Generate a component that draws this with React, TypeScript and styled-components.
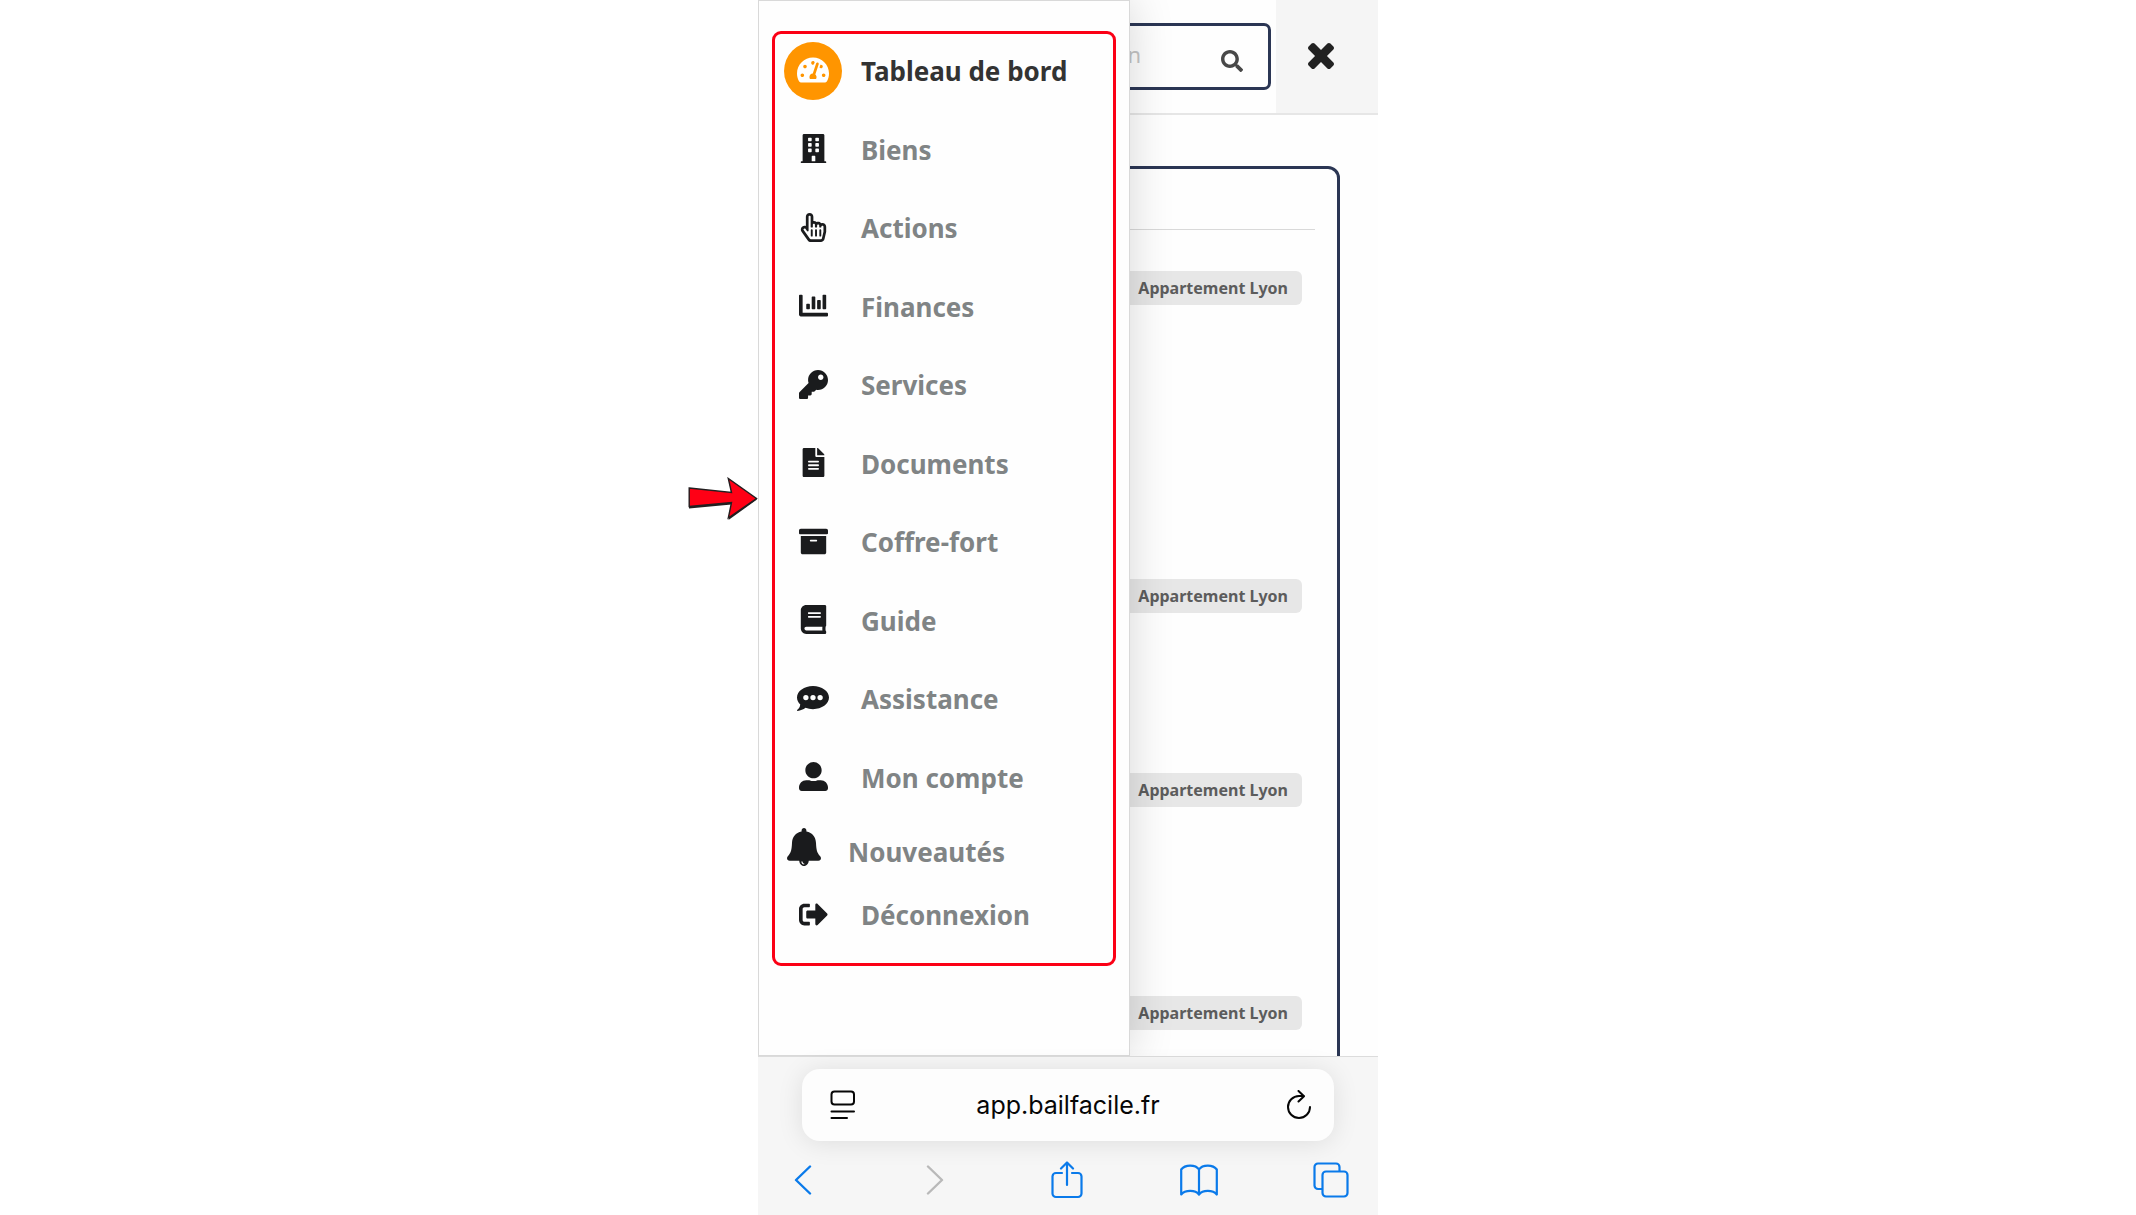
import React from "react";
import styled, { createGlobalStyle, css } from "styled-components";
import {
  FaArchive,
  FaBook,
  FaBuilding,
  FaChartBar,
  FaFileAlt,
  FaKey,
  FaRegHandPointer,
  FaSearch,
  FaSignOutAlt,
  FaTachometerAlt,
  FaUserAlt,
} from "react-icons/fa";

const navy = "#2b3654";
const blue = "#0a7aea";
const ink = "#1a1b1d";

const GlobalStyle = createGlobalStyle`
  *, *::before, *::after { box-sizing: border-box; }
  body {
    margin: 0;
    background: #fff;
    font-family: "Noto Sans", "Open Sans", sans-serif;
  }
  button { padding: 0; border: 0; background: none; font: inherit; color: inherit; }
  ul { margin: 0; padding: 0; list-style: none; }
`;

const Phone = styled.div`
  position: relative;
  display: flex;
  flex-direction: column;
  width: 100%;
  max-width: 620px;
  height: 100vh;
  margin: 0 auto;
  background: #fefefe;
`;

const Screen = styled.div`
  position: relative;
  flex: 1;
  min-height: 0;
  overflow: hidden;
`;

const Header = styled.header`
  display: flex;
  border-bottom: 2px solid #e6e6e6;
`;

const SearchForm = styled.form`
  display: flex;
  flex: 1;
  align-items: center;
  height: 67px;
  margin: 23px 5px 23px 24px;
  padding-right: 25px;
  border: 3px solid ${navy};
  border-radius: 7px;
`;

const SearchInput = styled.input`
  flex: 1;
  min-width: 0;
  height: 100%;
  padding: 0 80px 6px 0;
  border: 0;
  outline: 0;
  background: transparent;
  font-family: inherit;
  font-size: 22px;
  text-align: right;
  &::placeholder { color: #c4c4c4; opacity: 1; }
`;

const SearchButton = styled.button`
  display: flex;
  padding-top: 8px;
  color: #484848;
`;

const CloseButton = styled.button`
  display: flex;
  align-items: center;
  justify-content: center;
  width: 102px;
  padding: 0 12px 2px 0;
  background: #f5f5f5;
  color: #222;
`;

const Card = styled.main`
  min-height: 1000px;
  margin: 51px 38px 0;
  padding: 60px 22px 0;
  border: 3px solid ${navy};
  border-radius: 12px;
`;

const TagList = styled.ul`
  padding: 41px 13px 0;
  border-top: 1px solid #d9d9d9;
`;

const TagRow = styled.li<{ $height: number }>`
  display: flex;
  align-items: flex-start;
  justify-content: flex-end;
  height: ${(p) => p.$height}px;
`;

const Tag = styled.span`
  padding: 0 14px;
  border-radius: 6px;
  background: #e7e7e7;
  color: #5c5c5c;
  font-size: 16px;
  font-weight: 700;
  line-height: 34px;
`;

const Drawer = styled.aside`
  position: absolute;
  top: 0;
  bottom: 0;
  left: 0;
  display: flex;
  width: 60%;
  padding: 30px 13px 89px;
  border: 1px solid #d9d9d9;
  background: #fefefe;
  box-shadow: 0 0 42px rgba(0, 0, 0, 0.16);
`;

const Nav = styled.nav`
  display: flex;
  flex: 1;
  flex-direction: column;
  padding: 8px 9px 19px;
  border: 3px solid #fb0015;
  border-radius: 9px;
`;

const MainItems = styled.ul`
  display: flex;
  flex: 1;
  flex-direction: column;
  justify-content: space-between;
`;

const ExtraItems = styled.ul`
  display: flex;
  flex-direction: column;
  gap: 5px;
  margin-top: 16px;
`;

const IconSlot = styled.span<{ $active?: boolean }>`
  display: flex;
  align-items: center;
  justify-content: center;
  width: 58px;
  height: 58px;
  padding-bottom: 2px;
  border-radius: 50%;
  background: ${(p) => (p.$active ? "#ff9500" : "transparent")};
  color: ${(p) => (p.$active ? "#fff" : ink)};
`;

const NavLink = styled.a<{ $active?: boolean; $news?: boolean }>`
  display: flex;
  align-items: center;
  gap: 19px;
  height: 58px;
  color: ${(p) => (p.$active ? "#333" : "#808485")};
  font-size: 26px;
  font-weight: 700;
  text-decoration: none;
  ${(p) =>
    p.$news &&
    css`
      gap: 27px;
      padding-left: 3px;
      ${IconSlot} {
        width: 34px;
        padding-bottom: 10px;
      }
    `}
`;

const Pointer = styled.svg`
  position: absolute;
  top: 477px;
  right: 100%;
`;

const BrowserBar = styled.footer`
  position: relative;
  padding: 12px 44px 16px;
  border-top: 1px solid #dcdcdc;
  background: #f6f6f6;
`;

const AddressBar = styled.div`
  display: flex;
  align-items: center;
  height: 72px;
  padding: 0 22px 0 28px;
  border-radius: 18px;
  background: #fdfdfd;
  box-shadow: 0 2px 26px rgba(0, 0, 0, 0.1);
  color: #060606;
`;

const Address = styled.span`
  flex: 1;
  padding-right: 6px;
  font-family: Inter, "Liberation Sans", sans-serif;
  font-size: 25px;
  line-height: 32px;
  text-align: center;
`;

const Toolbar = styled.div`
  display: flex;
  justify-content: space-between;
  margin: 20px -16px 0 -18px;
`;

const BarButton = styled.button`
  display: flex;
  align-items: center;
  justify-content: center;
  color: #060606;
`;

const ToolButton = styled(BarButton)`
  width: 38px;
  height: 38px;
  color: ${blue};
  &:disabled { color: #b9b9b9; }
`;

const Line = styled.svg`
  fill: none;
  stroke: currentColor;
  stroke-linecap: round;
  stroke-linejoin: round;
`;

const CommentIcon = () => (
  <svg width="32" height="29" viewBox="0 0 576 512" fill="currentColor">
    <path
      fillRule="evenodd"
      d="M576 240c0 115-129 208-288 208-48.300 0-93.900-8.600-133.900-23.800-40.300 31.200-89.800 50.300-142.400 55.700-5.200.6-10.200-2.800-11.500-7.700-1.300-5 2.700-8.100 6.600-11.800 19.300-18.400 42.700-32.800 51.900-94.600C21.900 330.900 0 287.300 0 240 0 125.100 129 32 288 32s288 93.100 288 208zM112 240a48 48 0 1 0 96 0a48 48 0 1 0-96 0zM240 240a48 48 0 1 0 96 0a48 48 0 1 0-96 0zM368 240a48 48 0 1 0 96 0a48 48 0 1 0-96 0z"
    />
  </svg>
);

const BellIcon = () => (
  <svg width="34" height="38" viewBox="0 0 34 38" fill="currentColor">
    <path d="M17 0c1.400 0 2.400 1 2.400 2.400v1.200C25.500 4.800 28.700 9 29 15c.3 6.500.8 9.500 4.200 13.300 1.600 2 .6 4.500-1.900 4.500H2.700c-2.500 0-3.500-2.500-1.900-4.500C4.200 24.500 4.700 21.500 5 15c.3-6 3.500-10.200 9.600-11.400V2.400C14.600 1 15.600 0 17 0z" />
    <path
      fillRule="evenodd"
      d="M12.200 32h9.600c0 3.500-2.100 6-4.800 6s-4.800-2.500-4.800-6zM14.300 33.400c.2 1.900 1.200 2.900 2.900 3l.1-.9c-1-.1-1.700-.8-1.800-2.100z"
    />
  </svg>
);

const CrossIcon = () => (
  <svg width="26" height="26" viewBox="302 366 1188 1188" fill="currentColor">
    <path d="M1490 1322q0 40-28 68l-136 136q-28 28-68 28t-68-28l-294-294-294 294q-28 28-68 28t-68-28l-136-136q-28-28-28-68t28-68l294-294-294-294q-28-28-28-68t28-68l136-136q28-28 68-28t68 28l294 294 294-294q28-28 68-28t68 28l136 136q28 28 28 68t-28 68l-294 294 294 294q28 28 28 68z" />
  </svg>
);

const items: { label: string; icon: React.ReactNode; active?: boolean }[] = [
  { label: "Tableau de bord", icon: <FaTachometerAlt size={32} />, active: true },
  { label: "Biens", icon: <FaBuilding size={29} /> },
  { label: "Actions", icon: <FaRegHandPointer size={29} /> },
  { label: "Finances", icon: <FaChartBar size={29} /> },
  { label: "Services", icon: <FaKey size={29} /> },
  { label: "Documents", icon: <FaFileAlt size={29} /> },
  { label: "Coffre-fort", icon: <FaArchive size={29} /> },
  { label: "Guide", icon: <FaBook size={29} /> },
  { label: "Assistance", icon: <CommentIcon /> },
  { label: "Mon compte", icon: <FaUserAlt size={29} /> },
];

const rows = [308, 194, 223, 60];

export default function App() {
  return (
    <>
      <GlobalStyle />
      <Phone>
        <Screen>
          <Header>
            <SearchForm role="search">
              <SearchInput type="text" aria-label="Rechercher" placeholder="Rechercher un bien" />
              <SearchButton type="button" aria-label="Lancer la recherche">
                <FaSearch size={22} />
              </SearchButton>
            </SearchForm>
            <CloseButton type="button" aria-label="Fermer le menu">
              <CrossIcon />
            </CloseButton>
          </Header>
          <Card>
            <TagList>
              {rows.map((height, i) => (
                <TagRow key={i} $height={height}>
                  <Tag>Appartement Lyon</Tag>
                </TagRow>
              ))}
            </TagList>
          </Card>
          <Drawer>
            <Nav aria-label="Menu principal">
              <MainItems>
                {items.map((item) => (
                  <li key={item.label}>
                    <NavLink href="#" $active={item.active}>
                      <IconSlot $active={item.active}>{item.icon}</IconSlot>
                      {item.label}
                    </NavLink>
                  </li>
                ))}
              </MainItems>
              <ExtraItems>
                <li>
                  <NavLink href="#" $news>
                    <IconSlot>
                      <BellIcon />
                    </IconSlot>
                    Nouveautés
                  </NavLink>
                </li>
                <li>
                  <NavLink href="#">
                    <IconSlot>
                      <FaSignOutAlt size={29} />
                    </IconSlot>
                    Déconnexion
                  </NavLink>
                </li>
              </ExtraItems>
            </Nav>
          </Drawer>
        </Screen>

        <BrowserBar>
          <AddressBar>
            <BarButton type="button" aria-label="Options de la page">
              <Line width="26" height="30" viewBox="0 0 26 30" strokeWidth="2">
                <rect x="1.500" y="1.500" width="22.500" height="13" rx="3" />
                <path d="M1.500 21.500H24M1.500 28H17" />
              </Line>
            </BarButton>
            <Address>app.bailfacile.fr</Address>
            <BarButton type="button" aria-label="Recharger">
              <Line width="26" height="30" viewBox="0 0 26 30" strokeWidth="2">
                <path d="M24 17A11 11 0 1 1 13 6H18M12.500 1L18 6.200L12.500 11.500" />
              </Line>
            </BarButton>
          </AddressBar>
          <Toolbar>
            <ToolButton type="button" aria-label="Page précédente">
              <Line width="18" height="30" viewBox="0 0 18 30" strokeWidth="2.400">
                <path d="M16 1.500L2 15L16 28.500" />
              </Line>
            </ToolButton>
            <ToolButton type="button" aria-label="Page suivante" disabled>
              <Line width="18" height="30" viewBox="0 0 18 30" strokeWidth="2.400">
                <path d="M2 1.500L16 15L2 28.500" />
              </Line>
            </ToolButton>
            <ToolButton type="button" aria-label="Partager">
              <Line width="32" height="38" viewBox="0 0 32 38" strokeWidth="2.200">
                <path d="M11 12H5a3.500 3.500 0 0 0-3.500 3.500v17A3.500 3.500 0 0 0 5 36h22a3.500 3.500 0 0 0 3.500-3.500v-17A3.500 3.500 0 0 0 27 12h-6M16 24V1.500M10 7.500L16 1.500L22 7.500" />
              </Line>
            </ToolButton>
            <ToolButton type="button" aria-label="Signets">
              <Line width="38" height="32" viewBox="0 0 38 32" strokeWidth="2.200">
                <path d="M19 5.500C15.500.2 5 .2 1.200 5.500V30.500C5 25.700 15.500 25.700 19 30.500C22.500 25.700 33 25.700 36.800 30.500V5.500C33 .2 22.500.2 19 5.500V30.500" />
              </Line>
            </ToolButton>
            <ToolButton type="button" aria-label="Onglets">
              <Line width="36" height="36" viewBox="0 0 36 36" strokeWidth="2.200">
                <path d="M9 27H5a3.500 3.500 0 0 1-3.500-3.500V5A3.500 3.500 0 0 1 5 1.500H23A3.500 3.500 0 0 1 26.500 5V9" />
                <rect x="9.500" y="9.500" width="25" height="25" rx="3.500" />
              </Line>
            </ToolButton>
          </Toolbar>
        </BrowserBar>

        <Pointer width="70" height="44" viewBox="0 0 70 44" aria-hidden="true">
          <path d="M1 12L43.500 16.500L40.500 2L69 22.500L40.500 43L43.500 27.500L1 31.500Z" fill="#231f20" />
          <path
            d="M1.200 11L43.500 15.500L40.300 1.500L68.500 21.500L40.300 41L43.500 25.500L1.200 29.500Z"
            fill="#ff0015"
            stroke="#231f20"
            strokeWidth="1.400"
          />
        </Pointer>
      </Phone>
    </>
  );
}
